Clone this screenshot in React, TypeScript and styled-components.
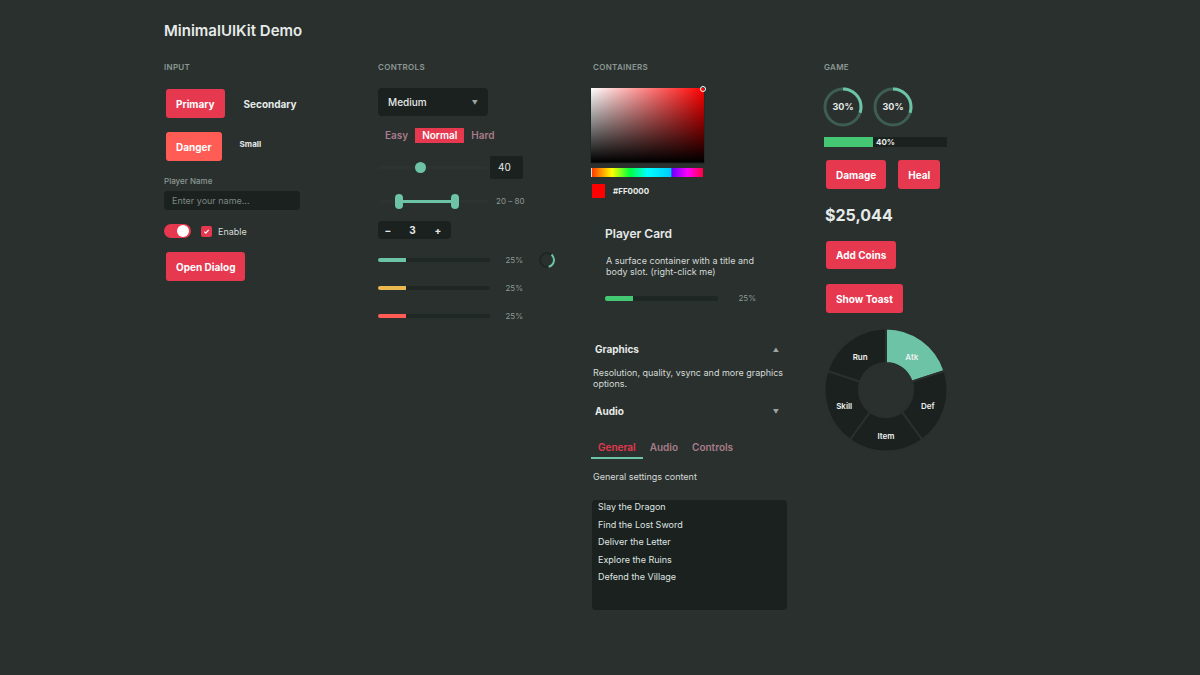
import styled, { createGlobalStyle, css } from 'styled-components';

const C = {
  bg: '#2a302e',
  panel: '#1b211f',
  track: '#1f2724',
  text: '#e6eae8',
  muted: '#8b9893',
  red: '#e6384f',
  coral: '#ff5c55',
  teal: '#6cc3a5',
  green: '#44c873',
  yellow: '#e9b94f',
  mauve: '#a87c8a',
};

const GlobalStyle = createGlobalStyle`
  html, body {
    margin: 0;
    background: ${C.bg};
    font-family: Inter, "Noto Sans", sans-serif;
    color: ${C.text};
  }
  * { box-sizing: border-box; }
`;

const Page = styled.div`
  width: 1200px;
  height: 675px;
  padding: 21px 0 0 164px;
  overflow: hidden;
`;

const Title = styled.h1`
  margin: 0;
  font-size: 15px;
  line-height: 20px;
  font-weight: 600;
`;

const Columns = styled.div`
  margin-top: 20px;
  display: grid;
  grid-template-columns: 214px 215px 231px 200px;
`;

const Column = styled.div`
  display: flex;
  flex-direction: column;
  align-items: flex-start;
`;

const SectionLabel = styled.div`
  font-size: 8px;
  line-height: 12px;
  font-weight: 600;
  letter-spacing: 0.3px;
  text-transform: uppercase;
  color: ${C.muted};
`;

const Row = styled.div<{ $mt: number; $gap?: number; $align?: string }>`
  display: flex;
  align-items: ${p => p.$align ?? 'center'};
  gap: ${p => p.$gap ?? 0}px;
  margin-top: ${p => p.$mt}px;
`;

type Variant = 'primary' | 'danger' | 'ghost';

const Button = styled.button<{ $variant?: Variant; $small?: boolean; $mt?: number; $h?: number }>`
  height: ${p => p.$h ?? 29}px;
  padding: 0 10px;
  margin: ${p => p.$mt ?? 0}px 0 0 2px;
  border: none;
  border-radius: 3px;
  font-family: inherit;
  font-size: 10px;
  font-weight: 700;
  color: #fff;
  background: ${C.red};
  cursor: pointer;
  ${p =>
    p.$variant === 'danger' &&
    css`
      background: ${C.coral};
    `}
  ${p =>
    p.$variant === 'ghost' &&
    css`
      background: transparent;
      color: ${C.text};
    `}
  ${p =>
    p.$small &&
    css`
      height: 24px;
      padding: 0 7px;
      font-size: 8px;
    `}
`;

const FieldLabel = styled.div`
  margin-top: 15px;
  font-size: 8px;
  line-height: 10px;
  font-weight: 500;
  color: ${C.muted};
`;

const TextInput = styled.input`
  margin-top: 5px;
  width: 136px;
  height: 19px;
  padding: 0 8px;
  border: none;
  border-radius: 3px;
  background: ${C.panel};
  color: ${C.text};
  font-family: inherit;
  font-size: 9px;
  outline: none;
  &::placeholder {
    color: #7d8884;
  }
`;

const Toggle = styled.div<{ $on: boolean }>`
  width: 27px;
  height: 14px;
  border-radius: 7px;
  background: ${p => (p.$on ? C.red : C.track)};
  display: flex;
  align-items: center;
  justify-content: ${p => (p.$on ? 'flex-end' : 'flex-start')};
  padding: 0 2px;
  &::after {
    content: '';
    width: 12px;
    height: 12px;
    border-radius: 50%;
    background: #fff;
  }
`;

const CheckBox = styled.div`
  width: 11px;
  height: 11px;
  margin-left: 10px;
  border-radius: 2px;
  background: ${C.red};
  display: flex;
  align-items: center;
  justify-content: center;
`;

const CheckLabel = styled.span`
  margin-left: 6px;
  font-size: 9px;
  color: #d5dbd8;
`;

/* controls */

const Select = styled.div`
  margin-top: 15px;
  width: 110px;
  height: 28px;
  padding: 0 10px;
  border-radius: 4px;
  background: ${C.panel};
  display: flex;
  align-items: center;
  justify-content: space-between;
  font-size: 10px;
  font-weight: 500;
`;

const Caret = styled.span`
  font-size: 6px;
  color: #9aa5a1;
`;

const Segmented = styled.div`
  margin-top: 12px;
  display: flex;
`;

const Segment = styled.div<{ $active?: boolean }>`
  height: 15px;
  line-height: 15px;
  padding: 0 7px;
  font-size: 10px;
  font-weight: 600;
  color: ${p => (p.$active ? '#fff' : C.mauve)};
  background: ${p => (p.$active ? C.red : 'transparent')};
`;

const SliderTrack = styled.div<{ $w: number }>`
  position: relative;
  width: ${p => p.$w}px;
  height: 3px;
  border-radius: 2px;
  background: #2c3331;
`;

const Knob = styled.div`
  position: absolute;
  top: 50%;
  width: 11px;
  height: 11px;
  margin: -5.5px 0 0 -5.5px;
  border-radius: 50%;
  background: ${C.teal};
`;

const PillKnob = styled.div`
  position: absolute;
  top: 50%;
  width: 8px;
  height: 15px;
  margin: -7.5px 0 0 -4px;
  border-radius: 4px;
  background: ${C.teal};
`;

const RangeFill = styled.div`
  position: absolute;
  top: 0;
  height: 3px;
  background: ${C.teal};
`;

const NumBox = styled.div`
  margin-left: 2px;
  width: 33px;
  height: 23px;
  padding-left: 8px;
  border-radius: 2px;
  background: ${C.panel};
  font-size: 10px;
  line-height: 23px;
`;

const RangeLabel = styled.span`
  margin-left: 8px;
  font-size: 8px;
  color: ${C.muted};
`;

const Stepper = styled.div`
  margin-top: 12px;
  width: 73px;
  height: 18px;
  padding: 0 2px 0 0;
  border-radius: 4px;
  background: ${C.panel};
  display: grid;
  grid-template-columns: 20px 1fr 22px;
  align-items: center;
  text-align: center;
  font-size: 10px;
  font-weight: 700;
`;

const Bar = styled.div<{ $w: number; $h: number }>`
  width: ${p => p.$w}px;
  height: ${p => p.$h}px;
  border-radius: 2px;
  background: ${C.track};
  overflow: hidden;
`;

const BarFill = styled.div<{ $color: string }>`
  height: 100%;
  background: ${p => p.$color};
`;

const Pct = styled.span<{ $w: number }>`
  width: ${p => p.$w}px;
  text-align: right;
  font-size: 8px;
  color: ${C.muted};
`;

/* containers */

const SVBox = styled.div`
  position: relative;
  margin: 15px 0 0 -2px;
  width: 113px;
  height: 74px;
  background: linear-gradient(to top, #000, rgba(0, 0, 0, 0)),
    linear-gradient(to right, #fff, #f00);
  box-shadow: 0 1px 1px #0d100f;
`;

const SVMarker = styled.div`
  position: absolute;
  right: -2px;
  top: -2px;
  width: 6px;
  height: 6px;
  border-radius: 50%;
  border: 1.5px solid #fff;
`;

const HueBar = styled.div`
  margin: 6px 0 0 -2px;
  width: 112px;
  height: 9px;
  border-left: 1px solid #ddd;
  background: linear-gradient(
    to right,
    #ff3a00 0%,
    #ffff00 18%,
    #00ff40 34%,
    #00ffff 50%,
    #00ccff 71%,
    #6a00ff 72%,
    #ff00ff 86%,
    #ff0040 100%
  );
`;

const Swatch = styled.div`
  width: 13px;
  height: 14px;
  margin-left: -1px;
  background: #f00;
`;

const HexLabel = styled.span`
  margin-left: 8px;
  font-size: 8px;
  font-weight: 700;
`;

const Card = styled.div`
  margin-top: 16px;
  width: 175px;
  padding: 12px;
`;

const CardTitle = styled.div`
  font-size: 12px;
  line-height: 16px;
  font-weight: 600;
`;

const CardBody = styled.p`
  margin: 13px 0 0 1px;
  font-size: 9px;
  line-height: 11px;
  color: #d5dbd8;
`;

const AccordionHeader = styled.div<{ $mt: number }>`
  margin-top: ${p => p.$mt}px;
  width: 192px;
  height: 20px;
  padding: 0 6px 0 2px;
  display: flex;
  align-items: center;
  justify-content: space-between;
  font-size: 10px;
  font-weight: 700;
`;

const AccordionBody = styled.p`
  margin: 9px 0 0;
  width: 192px;
  font-size: 9px;
  line-height: 10.5px;
  color: #d5dbd8;
`;

const Tabs = styled.div`
  margin: 16px 0 0 -2px;
  display: flex;
`;

const Tab = styled.div<{ $active?: boolean }>`
  height: 22px;
  padding: 0 7px;
  line-height: 20px;
  font-size: 10px;
  font-weight: 600;
  color: ${p => (p.$active ? C.red : C.mauve)};
  border-bottom: 2px solid ${p => (p.$active ? C.teal : 'transparent')};
`;

const TabContent = styled.div`
  margin-top: 12px;
  font-size: 9px;
  line-height: 12px;
  color: #d5dbd8;
`;

const ListBox = styled.ul`
  margin: 17px 0 0 -1px;
  padding: 0 6px;
  width: 195px;
  height: 110px;
  border-radius: 4px;
  background: ${C.panel};
  list-style: none;
`;

const ListItem = styled.li`
  height: 17.5px;
  line-height: 14px;
  font-size: 9px;
  color: #dfe4e1;
`;

/* game */

const Money = styled.div`
  margin: 16px 0 0 1px;
  font-size: 16px;
  line-height: 20px;
  font-weight: 700;
`;

const HpBar = styled.div`
  position: relative;
  margin-top: 10px;
  width: 123px;
  height: 10px;
  background: ${C.panel};
  display: flex;
  align-items: center;
  justify-content: center;
`;

const HpFill = styled.div`
  position: absolute;
  left: 0;
  top: 0;
  bottom: 0;
  background: ${C.green};
`;

const HpLabel = styled.span`
  position: relative;
  font-size: 8px;
  font-weight: 700;
`;

const Radial = styled.svg`
  margin-top: 15px;
  display: block;
`;

const SpinnerSvg = styled.svg`
  margin-left: 15px;
`;

const RingProgress = ({ value }: { value: number }) => {
  const r = 18;
  const len = 2 * Math.PI * r;
  return (
    <svg width="40" height="40" viewBox="0 0 40 40">
      <circle cx="20" cy="20" r={r} fill="none" stroke="#3e5d53" strokeWidth="3" />
      <circle
        cx="20"
        cy="20"
        r={r}
        fill="none"
        stroke={C.teal}
        strokeWidth="3"
        strokeDasharray={`${len * value} ${len}`}
        transform="rotate(-90 20 20)"
      />
      <text
        x="20"
        y="20.5"
        textAnchor="middle"
        dominantBaseline="middle"
        fill={C.text}
        fontSize="9"
        fontWeight="700"
        fontFamily="Inter, sans-serif"
      >
        {Math.round(value * 100)}%
      </text>
    </svg>
  );
};

const Spinner = () => {
  const r = 7;
  const len = 2 * Math.PI * r;
  return (
    <SpinnerSvg width="18" height="18" viewBox="0 0 18 18">
      <circle cx="9" cy="9" r={r} fill="none" stroke={C.track} strokeWidth="2" />
      <circle
        cx="9"
        cy="9"
        r={r}
        fill="none"
        stroke={C.teal}
        strokeWidth="2"
        strokeDasharray={`${len * 0.35} ${len}`}
        transform="rotate(-50 9 9)"
      />
    </SpinnerSvg>
  );
};

const RadialMenu = () => {
  const cx = 62;
  const cy = 62;
  const R = 61.5;
  const r = 27;
  const items = ['Atk', 'Def', 'Item', 'Skill', 'Run'];
  const pt = (rad: number, deg: number) => {
    const a = (deg * Math.PI) / 180;
    return [cx + rad * Math.cos(a), cy + rad * Math.sin(a)];
  };
  return (
    <Radial width="124" height="124" viewBox="0 0 124 124">
      {items.map((label, i) => {
        const a0 = -90 + i * 72;
        const a1 = a0 + 72;
        const [x0, y0] = pt(R, a0);
        const [x1, y1] = pt(R, a1);
        const [x2, y2] = pt(r, a1);
        const [x3, y3] = pt(r, a0);
        const [lx, ly] = pt(44, a0 + 36);
        return (
          <g key={label}>
            <path
              d={`M${x0} ${y0} A${R} ${R} 0 0 1 ${x1} ${y1} L${x2} ${y2} A${r} ${r} 0 0 0 ${x3} ${y3} Z`}
              fill={i === 0 ? C.teal : C.panel}
              stroke={C.bg}
              strokeWidth="2"
            />
            <text
              x={lx}
              y={ly + 3}
              textAnchor="middle"
              dominantBaseline="middle"
              fill="#eef1ef"
              fontSize="8"
              fontWeight="600"
              fontFamily="Inter, sans-serif"
            >
              {label}
            </text>
          </g>
        );
      })}
    </Radial>
  );
};

const progress = [C.teal, C.yellow, C.coral];
const quests = ['Slay the Dragon', 'Find the Lost Sword', 'Deliver the Letter', 'Explore the Ruins', 'Defend the Village'];

export default function App() {
  return (
    <Page>
      <GlobalStyle />
      <Title>MinimalUIKit Demo</Title>
      <Columns>
        <Column>
          <SectionLabel>Input</SectionLabel>
          <Row $mt={16} $gap={7} $align="flex-start">
            <Button>Primary</Button>
            <Button $variant="ghost">Secondary</Button>
          </Row>
          <Row $mt={14} $gap={9} $align="flex-start">
            <Button $variant="danger">Danger</Button>
            <Button $variant="ghost" $small>
              Small
            </Button>
          </Row>
          <FieldLabel>Player Name</FieldLabel>
          <TextInput placeholder="Enter your name..." />
          <Row $mt={14}>
            <Toggle $on />
            <CheckBox>
              <svg width="7" height="7" viewBox="0 0 8 8">
                <path d="M1.5 4.2 L3.2 5.8 L6.5 2.2" fill="none" stroke="#fff" strokeWidth="1.4" />
              </svg>
            </CheckBox>
            <CheckLabel>Enable</CheckLabel>
          </Row>
          <Button $mt={14}>Open Dialog</Button>
        </Column>

        <Column>
          <SectionLabel>Controls</SectionLabel>
          <Select>
            Medium
            <Caret>▼</Caret>
          </Select>
          <Segmented>
            <Segment>Easy</Segment>
            <Segment $active>Normal</Segment>
            <Segment>Hard</Segment>
          </Segmented>
          <Row $mt={13}>
            <SliderTrack $w={110}>
              <Knob style={{ left: '39%' }} />
            </SliderTrack>
            <NumBox>40</NumBox>
          </Row>
          <Row $mt={14} style={{ height: 16 }}>
            <SliderTrack $w={110}>
              <RangeFill style={{ left: 21, width: 56 }} />
              <PillKnob style={{ left: 21 }} />
              <PillKnob style={{ left: 77 }} />
            </SliderTrack>
            <RangeLabel>20 – 80</RangeLabel>
          </Row>
          <Stepper>
            <span>−</span>
            <span>3</span>
            <span>+</span>
          </Stepper>
          {progress.map((color, i) => (
            <Row key={color} $mt={i === 0 ? 12 : 10} style={{ height: 18 }}>
              <Bar $w={112} $h={4}>
                <BarFill $color={color} style={{ width: '25%' }} />
              </Bar>
              <Pct $w={33}>25%</Pct>
              {i === 0 && <Spinner />}
            </Row>
          ))}
        </Column>

        <Column>
          <SectionLabel>Containers</SectionLabel>
          <SVBox>
            <SVMarker />
          </SVBox>
          <HueBar />
          <Row $mt={7}>
            <Swatch />
            <HexLabel>#FF0000</HexLabel>
          </Row>
          <Card>
            <CardTitle>Player Card</CardTitle>
            <CardBody>A surface container with a title and body slot. (right-click me)</CardBody>
            <Row $mt={16} style={{ justifyContent: 'space-between' }}>
              <Bar $w={113} $h={5}>
                <BarFill $color={C.green} style={{ width: '25%' }} />
              </Bar>
              <Pct $w={30}>25%</Pct>
            </Row>
          </Card>
          <AccordionHeader $mt={24}>
            Graphics
            <Caret>▲</Caret>
          </AccordionHeader>
          <AccordionBody>Resolution, quality, vsync and more graphics options.</AccordionBody>
          <AccordionHeader $mt={12}>
            Audio
            <Caret>▼</Caret>
          </AccordionHeader>
          <Tabs>
            <Tab $active>General</Tab>
            <Tab>Audio</Tab>
            <Tab>Controls</Tab>
          </Tabs>
          <TabContent>General settings content</TabContent>
          <ListBox>
            {quests.map(q => (
              <ListItem key={q}>{q}</ListItem>
            ))}
          </ListBox>
        </Column>

        <Column>
          <SectionLabel>Game</SectionLabel>
          <Row $mt={14} $gap={10} style={{ marginLeft: -1 }}>
            <RingProgress value={0.3} />
            <RingProgress value={0.3} />
          </Row>
          <HpBar>
            <HpFill style={{ width: '40%' }} />
            <HpLabel>40%</HpLabel>
          </HpBar>
          <Row $mt={13} $gap={10}>
            <Button>Damage</Button>
            <Button>Heal</Button>
          </Row>
          <Money>$25,044</Money>
          <Button $mt={16} $h={28}>
            Add Coins
          </Button>
          <Button $mt={15}>Show Toast</Button>
          <RadialMenu />
        </Column>
      </Columns>
    </Page>
  );
}
